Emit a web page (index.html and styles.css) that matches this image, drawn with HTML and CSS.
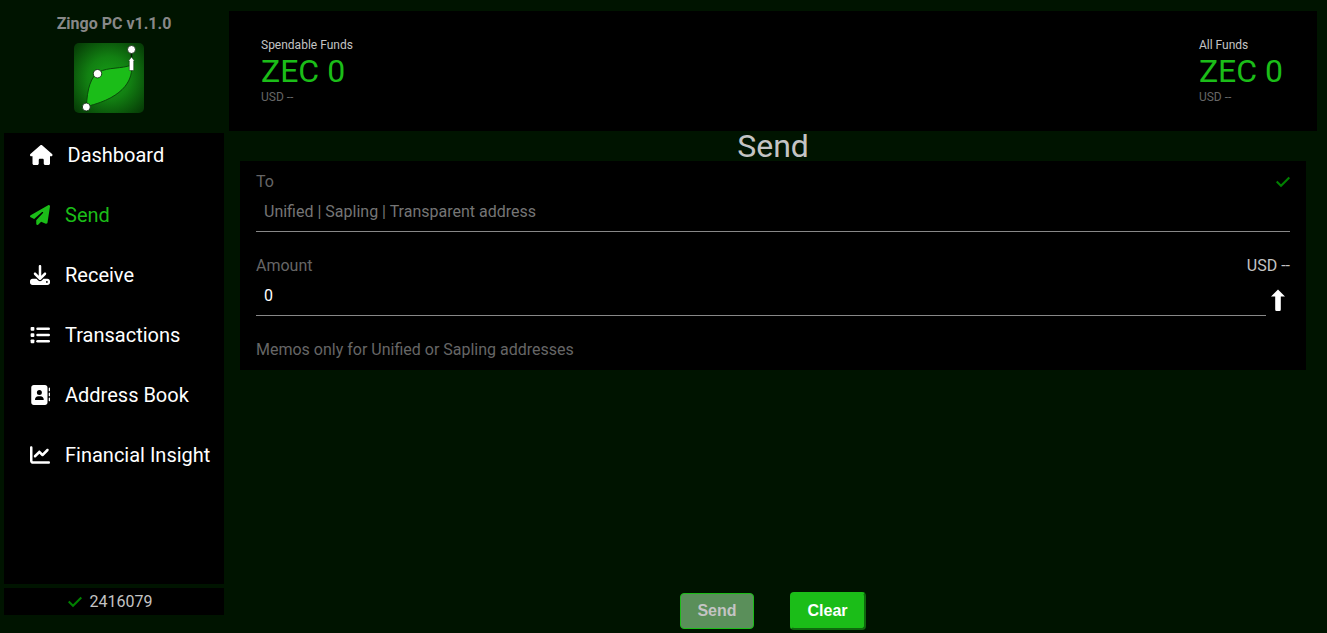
FILE: index.html
```html
<!DOCTYPE html>
<html lang="en">
<head>
<meta charset="utf-8">
<title>Zingo PC</title>
<link rel="stylesheet" href="styles.css">
</head>
<body>
<div class="app">
  <aside class="sidebar">
    <div class="brand">
      <div class="brand-name">Zingo PC v1.1.0</div>
      <svg class="brand-logo" viewBox="0 0 70 70" aria-hidden="true">
        <defs>
          <radialGradient id="glow" cx="50%" cy="50%" r="68%">
            <stop offset="0" stop-color="#16a016"/>
            <stop offset="0.45" stop-color="#128012"/>
            <stop offset="1" stop-color="#063a06"/>
          </radialGradient>
        </defs>
        <rect width="70" height="70" rx="5" fill="url(#glow)"/>
        <path d="M12.500 63.500C13 46 17 33 25 29C34 24 48 26 57.500 22C59 34 53 54 12.500 63.500Z" fill="#1bbd18" stroke="#0a4a0a"/>
        <path d="M57.500 7V18" stroke="#031c03" stroke-width="1.500"/>
        <path d="M57.500 14L60.500 18H59.700V27.500H55.300V18H54.500Z" fill="#fff" stroke="#0a300a" stroke-width="0.500"/>
        <g fill="#fff" stroke="#052005" stroke-width="0.800">
          <circle cx="57.500" cy="6.500" r="4"/>
          <circle cx="23.500" cy="30.700" r="4.200"/>
          <circle cx="12.300" cy="64" r="4"/>
        </g>
      </svg>
    </div>
    <nav class="menu">
      <a class="menu-link" href="#dashboard"><svg class="icon" viewBox="0 0 576 512" aria-hidden="true"><path d="M575.8 255.500c0 18-15 32.100-32 32.100h-32l.7 160.200c0 2.700-.2 5.400-.5 8.100V472c0 22.100-17.900 40-40 40H456c-1.100 0-2.200 0-3.300-.1c-1.400.1-2.800.1-4.200.1H416 392c-22.100 0-40-17.900-40-40V448 384c0-17.700-14.300-32-32-32H256c-17.700 0-32 14.300-32 32v64 24c0 22.100-17.900 40-40 40H160 128.100c-1.500 0-3-.1-4.500-.2c-1.200.1-2.400.2-3.600.2H104c-22.100 0-40-17.900-40-40V360c0-.9 0-1.900.1-2.800V287.600H32c-18 0-32-14-32-32.100c0-9 3-17 10-24L266.400 8c7-7 15-8 22-8s15 2 21 7L564.800 231.500c8 7 12 15 11 24z"/></svg>Dashboard</a>
      <a class="menu-link active" href="#send" aria-current="page"><svg class="icon" viewBox="0 0 512 512" aria-hidden="true"><path d="M498.100 5.600c10.100 7 15.400 19.100 13.500 31.200l-64 416c-1.500 9.700-7.400 18.200-16 23s-18.900 5.400-28 1.600L284 427.700l-68.500 74.100c-8.900 9.700-22.900 12.900-35.200 8.100S160 493.200 160 480V396.400c0-4 1.500-7.800 4.200-10.700L331.800 202.800c5.800-6.300 5.600-16-.4-22s-15.700-6.400-22-.7L106 360.800 17.700 316.600C7.100 311.300.3 300.700 0 288.900s5.900-22.800 16.100-28.700l448-256c10.700-6.100 23.900-5.500 34 1.400z"/></svg>Send</a>
      <a class="menu-link" href="#receive"><svg class="icon" viewBox="0 0 512 512" aria-hidden="true"><path d="M288 32c0-17.700-14.300-32-32-32s-32 14.300-32 32V274.700l-73.400-73.400c-12.500-12.500-32.800-12.500-45.300 0s-12.500 32.800 0 45.300l128 128c12.500 12.500 32.800 12.500 45.300 0l128-128c12.500-12.500 12.500-32.800 0-45.300s-32.800-12.500-45.300 0L288 274.700V32zM64 352c-35.300 0-64 28.700-64 64v32c0 35.300 28.700 64 64 64H448c35.300 0 64-28.700 64-64V416c0-35.300-28.700-64-64-64H346.500l-45.300 45.300c-25 25-65.500 25-90.500 0L165.500 352H64zm368 56a24 24 0 1 1 0 48 24 24 0 1 1 0-48z"/></svg>Receive</a>
      <a class="menu-link" href="#transactions"><svg class="icon" viewBox="0 0 512 512" aria-hidden="true"><rect x="16" y="48" width="96" height="96" rx="24"/><rect x="16" y="208" width="96" height="96" rx="24"/><rect x="16" y="368" width="96" height="96" rx="24"/><rect x="160" y="64" width="352" height="64" rx="32"/><rect x="160" y="224" width="352" height="64" rx="32"/><rect x="160" y="384" width="352" height="64" rx="32"/></svg>Transactions</a>
      <a class="menu-link" href="#addressbook"><svg class="icon" viewBox="0 0 512 512" aria-hidden="true"><path d="M96 0C60.700 0 32 28.700 32 64V448c0 35.300 28.700 64 64 64H384c35.300 0 64-28.700 64-64V64c0-35.300-28.700-64-64-64H96zM208 288h64c44.200 0 80 35.800 80 80c0 8.800-7.200 16-16 16H144c-8.800 0-16-7.200-16-16c0-44.200 35.800-80 80-80zm-32-96a64 64 0 1 1 128 0 64 64 0 1 1-128 0zM512 80c0-8.800-7.200-16-16-16s-16 7.200-16 16v64c0 8.800 7.200 16 16 16s16-7.200 16-16V80zM496 192c-8.800 0-16 7.200-16 16v64c0 8.800 7.200 16 16 16s16-7.200 16-16V208c0-8.800-7.200-16-16-16zm16 144c0-8.800-7.200-16-16-16s-16 7.200-16 16v64c0 8.800 7.200 16 16 16s16-7.200 16-16V336z"/></svg>Address Book</a>
      <a class="menu-link" href="#insight"><svg class="icon" viewBox="0 0 512 512" aria-hidden="true"><path d="M64 64c0-17.700-14.300-32-32-32S0 46.300 0 64V400c0 44.200 35.800 80 80 80H480c17.700 0 32-14.300 32-32s-14.300-32-32-32H80c-8.800 0-16-7.200-16-16V64zm406.600 86.600c12.500-12.500 12.500-32.800 0-45.300s-32.800-12.500-45.300 0L320 210.700l-57.400-57.400c-12.500-12.500-32.800-12.500-45.300 0l-112 112c-12.500 12.500-12.500 32.800 0 45.300s32.800 12.500 45.300 0L240 221.300l57.400 57.400c12.500 12.500 32.800 12.500 45.300 0l128-128z"/></svg>Financial Insight</a>
    </nav>
    <div class="status">
      <svg class="check" viewBox="0 0 14 16" aria-hidden="true"><path d="M.7 7.500L5 11.800L13.300 3.500"/></svg>
      <span>2416079</span>
    </div>
  </aside>

  <main class="main">
    <header class="balances">
      <div class="balance">
        <div class="balance-label">Spendable Funds</div>
        <div class="balance-zec">ZEC 0</div>
        <div class="balance-usd">USD --</div>
      </div>
      <div class="balance">
        <div class="balance-label">All Funds</div>
        <div class="balance-zec">ZEC 0</div>
        <div class="balance-usd">USD --</div>
      </div>
    </header>
    <h1 class="title">Send</h1>
    <form class="send-form" id="send-form">
      <div class="field">
        <div class="field-head">
          <label for="to">To</label>
          <svg class="check" viewBox="0 0 14 16" aria-hidden="true"><path d="M.7 7.500L5 11.800L13.300 3.500"/></svg>
        </div>
        <input class="text-input" id="to" type="text" placeholder="Unified | Sapling | Transparent address">
      </div>
      <div class="field">
        <div class="field-head">
          <label for="amount">Amount</label>
          <span class="usd">USD --</span>
        </div>
        <div class="amount-row">
          <input class="text-input" id="amount" type="text" value="0">
          <button class="max-button" type="button" aria-label="Send maximum amount">
            <svg class="arrow" viewBox="0 0 24 24" aria-hidden="true"><path d="M12 1.500L19 8.500H14.800V21.500Q14.800 23 13.500 23H10.500Q9.200 23 9.200 21.500V8.500H5Z"/></svg>
          </button>
        </div>
      </div>
      <div class="memo-note">Memos only for Unified or Sapling addresses</div>
    </form>
    <div class="actions">
      <button class="button" type="submit" form="send-form" disabled>Send</button>
      <button class="button" type="button">Clear</button>
    </div>
  </main>
</div>
</body>
</html>
```

FILE: styles.css
```css
* {
  box-sizing: border-box;
}

body {
  margin: 0;
  background: #001400;
  color: #c4c4c4;
  font-family: Roboto, "Liberation Sans", sans-serif;
  font-size: 16px;
  line-height: 20px;
}

.app {
  display: grid;
  grid-template-columns: 220px minmax(0, 1fr);
  column-gap: 5px;
  min-height: 100vh;
  padding: 0 10px 0 4px;
}

.sidebar {
  display: flex;
  flex-direction: column;
  gap: 4px;
  padding-bottom: 18px;
}

.brand {
  display: flex;
  flex-direction: column;
  align-items: center;
  gap: 9px;
  padding: 14px 0 16px;
}

.brand-name {
  color: #888;
  font-weight: 700;
}

.brand-logo {
  width: 70px;
  height: 70px;
  margin-right: 10px;
}

.menu {
  display: flex;
  flex: 1;
  flex-direction: column;
  gap: 36px;
  padding: 10px 0 10px 26px;
  background: #000;
}

.menu-link {
  display: flex;
  align-items: center;
  gap: 15px;
  color: #fff;
  font-size: 20px;
  line-height: 24px;
  text-decoration: none;
  white-space: nowrap;
}

.menu-link.active {
  color: #1bbd18;
}

.icon {
  height: 20px;
  fill: currentColor;
}

.status {
  display: flex;
  align-items: center;
  justify-content: center;
  gap: 8px;
  height: 27px;
  padding-right: 8px;
  background: #000;
}

.check {
  width: 14px;
  height: 16px;
  fill: none;
  stroke: #008000;
  stroke-width: 2;
}

.main {
  display: flex;
  flex-direction: column;
  padding-top: 11px;
}

.balances {
  display: flex;
  justify-content: space-between;
  padding: 26px 34px 26px 32px;
  background: #000;
}

.balance-label,
.balance-usd {
  font-size: 12px;
  line-height: 16px;
}

.balance-zec {
  color: #1bbd18;
  font-size: 32px;
  line-height: 36px;
}

.balance-usd {
  color: #666;
}

.title {
  margin: 0;
  font-size: 32px;
  font-weight: 400;
  line-height: 30px;
  text-align: center;
}

.send-form {
  display: flex;
  flex-direction: column;
  gap: 24px;
  margin: 0 11px;
  padding: 11px 16px 10px;
  background: #000;
}

.field-head {
  display: flex;
  align-items: center;
  justify-content: space-between;
}

.field-head label,
.memo-note {
  color: #666;
}

.text-input {
  display: block;
  width: 100%;
  height: 40px;
  padding: 0 8px;
  border: 0;
  border-bottom: 1px solid #888;
  background: transparent;
  color: #fff;
  font: inherit;
}

.text-input::placeholder {
  color: #757575;
  opacity: 1;
}

.amount-row {
  display: flex;
  align-items: center;
}

.max-button {
  display: flex;
  padding: 8px 0 0;
  border: 0;
  background: none;
}

.arrow {
  width: 24px;
  height: 24px;
  fill: #fff;
}

.actions {
  display: flex;
  align-items: center;
  justify-content: center;
  gap: 36px;
  margin-top: auto;
  padding-bottom: 3px;
}

.button {
  height: 38px;
  padding: 0 16px;
  border: 2px outset #1bbd18;
  border-radius: 4px;
  background: #1bbd18;
  color: #fff;
  font: 700 16px/20px "Liberation Sans", Arial, sans-serif;
}

.button:disabled {
  height: 36px;
  border: 1px solid #1bbd18;
  background: #5a8f5a;
  color: #c4c4c4;
}
```
